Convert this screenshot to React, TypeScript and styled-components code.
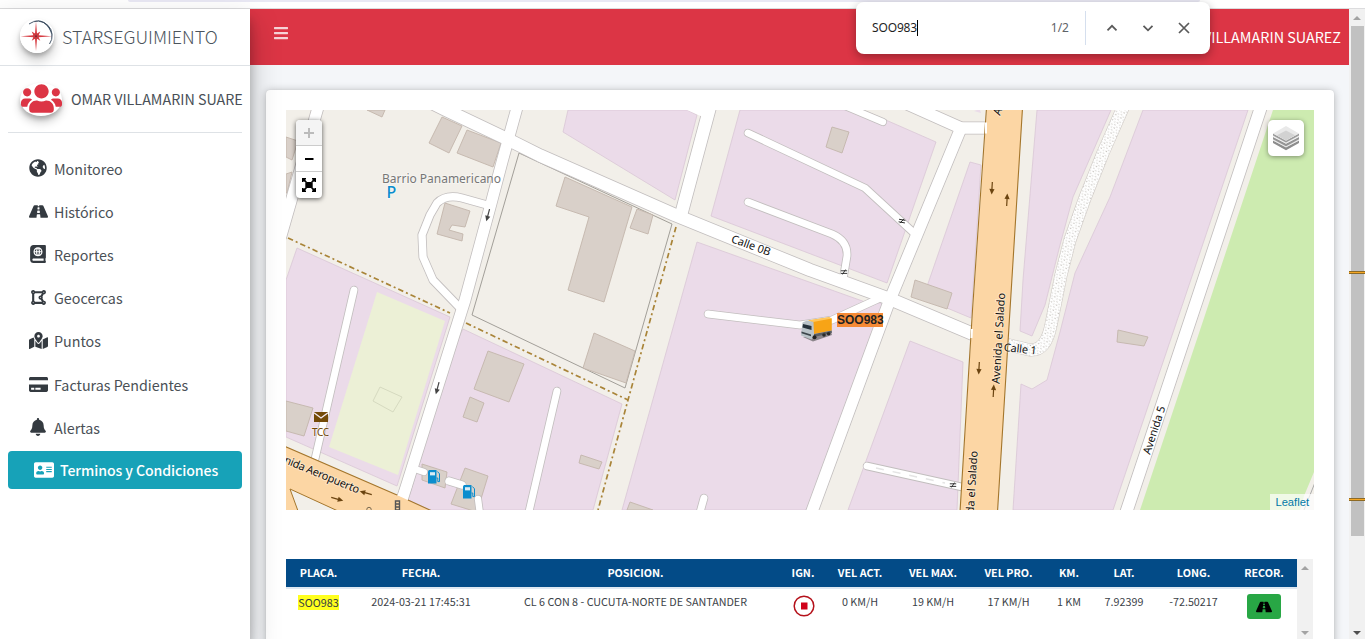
import React from "react";
import styled, { createGlobalStyle, css } from "styled-components";
import {
  FaAddressCard,
  FaAtlas,
  FaBars,
  FaBell,
  FaCreditCard,
  FaDrawPolygon,
  FaGlobeAmericas,
  FaMapMarkedAlt,
  FaRoad,
  FaUsers,
} from "react-icons/fa";

const ui = `"Noto Sans CJK SC", "Open Sans", sans-serif`;

const GlobalStyle = createGlobalStyle`
  * { box-sizing: border-box; }
  body { margin: 0; background: #fff; font-family: ${ui}; color: #343a40; overflow: hidden; }
`;

const Window = styled.div`
  position: relative;
  display: flex;
  flex-direction: column;
  width: 1365px;
  height: 639px;
  overflow: hidden;
  background: #fff;
`;
const BrowserEdge = styled.div`
  flex: none;
  height: 9px;
  padding-left: 128px;
  border-bottom: 1px solid #dcdcde;
`;
const AddressBar = styled.div`
  width: 1072px;
  height: 2px;
  background: #e9e8f4;
  border-radius: 0 0 8px 8px;
`;
const Page = styled.div`
  display: flex;
  flex: 1;
  min-height: 0;
`;

/* Sidebar */
const Sidebar = styled.aside`
  position: relative;
  z-index: 2;
  flex: none;
  width: 250px;
  background: #fff;
  box-shadow: 0 14px 28px rgba(0, 0, 0, 0.25), 0 10px 10px rgba(0, 0, 0, 0.22);
`;
const Brand = styled.div`
  display: flex;
  align-items: center;
  height: 57px;
  padding: 0 0 2px 20px;
  border-bottom: 1px solid #dee2e6;
  gap: 8px;
`;
const BrandLogo = styled.span`
  width: 34px;
  height: 34px;
  border-radius: 50%;
  box-shadow: 0 8px 12px rgba(0, 0, 0, 0.2), 0 3px 4px rgba(0, 0, 0, 0.22);
  svg { display: block; }
`;
const BrandName = styled.span`
  font-size: 17.9px;
  font-weight: 300;
  line-height: 30px;
  color: #4b545c;
  white-space: nowrap;
`;
const UserPanel = styled.div`
  display: flex;
  align-items: center;
  height: 67px;
  margin: 0 8px;
  padding-left: 12px;
  gap: 9px;
  border-bottom: 1px solid #dee2e6;
`;
const UserAvatar = styled.span`
  display: flex;
  flex: none;
  justify-content: center;
  width: 42px;
  height: 33px;
  border-radius: 50%;
  color: #dc3545;
  box-shadow: 0 6px 10px rgba(0, 0, 0, 0.2), 0 3px 4px rgba(0, 0, 0, 0.2);
`;
const UserName = styled.span`
  font-size: 14.3px;
  line-height: 24px;
  white-space: nowrap;
  color: #495057;
`;
const Menu = styled.nav`
  display: flex;
  flex-direction: column;
  padding: 14px 8px 0;
`;
const MenuItem = styled.a<{ $active?: boolean }>`
  display: flex;
  align-items: center;
  height: 43.2px;
  padding-left: 19px;
  font-size: 14.3px;
  line-height: 24px;
  color: #4a5056;
  white-space: nowrap;
  gap: 5px;
  svg { color: #343a40; }
  ${(p) =>
    p.$active &&
    css`
      height: 38px;
      margin-top: 2px;
      padding-left: 25px;
      border-radius: 4px;
      background: #17a2b8;
      color: #fff;
      font-size: 14.1px;
      font-weight: 500;
      letter-spacing: -0.08px;
      svg { color: #fff; }
    `}
`;
const MenuIcon = styled.span`
  display: flex;
  flex: none;
  justify-content: center;
  width: 22px;
  padding-bottom: 1px;
`;

/* Main column */
const Main = styled.main`
  flex: 1;
  min-width: 0;
  background: #f4f6f9;
`;
const Navbar = styled.header`
  display: flex;
  align-items: center;
  justify-content: space-between;
  height: 56px;
  padding: 0 8px 0 23px;
  background: #dc3545;
  color: #fff;
  font-size: 14.4px;
  svg { color: #f6d3d7; margin-bottom: 8px; }
`;
const NavUser = styled.span`
  line-height: 24px;
  white-space: nowrap;
`;
const Card = styled.section`
  height: 570px;
  margin: 25px 15px 0 16px;
  padding: 20px;
  border-radius: 4px;
  background: #fff;
  box-shadow: 0 0 1px rgba(0, 0, 0, 0.13), 0 1px 8px rgba(0, 0, 0, 0.28);
`;

/* Map */
const MapBox = styled.div`
  position: relative;
  height: 400px;
  overflow: hidden;
  background: #f2efe9;
  > svg { display: block; }
`;
const ZoomControl = styled.div`
  position: absolute;
  top: 10px;
  left: 10px;
  width: 26px;
  height: 78px;
  border-radius: 4px;
  background: #fff;
  box-shadow: 0 1px 5px rgba(0, 0, 0, 0.65);
`;
const ZoomButton = styled.div<{ $off?: boolean }>`
  display: flex;
  align-items: center;
  justify-content: center;
  height: 26px;
  border-radius: ${(p) => (p.$off ? "4px 4px 0 0" : "0")};
  border-bottom: 1px solid #ccc;
  background: ${(p) => (p.$off ? "#f4f4f4" : "transparent")};
  color: ${(p) => (p.$off ? "#bbb" : "#000")};
  &:last-child { border-bottom: 0; }
`;
const LayersControl = styled.div`
  position: absolute;
  top: 10px;
  right: 10px;
  display: flex;
  align-items: center;
  justify-content: center;
  width: 36px;
  height: 36px;
  border-radius: 5px;
  background: #fff;
  box-shadow: 0 1px 5px rgba(0, 0, 0, 0.4);
`;
const Attribution = styled.div`
  position: absolute;
  right: 0;
  bottom: 0;
  padding: 0 5px;
  font: 11.2px/16px "Liberation Sans", Arial, sans-serif;
  color: #0078a8;
  background: rgba(255, 255, 255, 0.7);
`;
const PlateTag = styled.div`
  position: absolute;
  left: 551px;
  top: 203px;
  width: 46px;
  height: 14px;
  background: #f58a35;
  font: bold 12px/14px "Liberation Sans", Arial, sans-serif;
  color: #222;
  text-align: center;
  white-space: nowrap;
`;

/* Table */
const TableArea = styled.div`
  display: flex;
  height: 82px;
  margin-top: 49px;
`;
const Table = styled.div`
  flex: none;
  width: 1011px;
`;
const Row = styled.div<{ $head?: boolean }>`
  display: grid;
  grid-template-columns: 65px 140px 289px 46px 68px 78px 73px 48px 62px 77px 64px;
  justify-items: center;
  height: ${(p) => (p.$head ? 30 : 52)}px;
  padding-top: ${(p) => (p.$head ? 5 : 4)}px;
  border-bottom: ${(p) => (p.$head ? "2px solid #dee8f2" : "0")};
  background: ${(p) => (p.$head ? "#034b87" : "#fff")};
  color: ${(p) => (p.$head ? "#fff" : "#3c4248")};
  font-size: 10.75px;
  font-weight: ${(p) => (p.$head ? 700 : 400)};
  line-height: ${(p) => (p.$head ? 17 : 18)}px;
  white-space: nowrap;
`;
const Found = styled.mark`
  display: block;
  height: 15px;
  margin-top: 2px;
  line-height: 15px;
  background: #ffff1e;
  color: #343a40;
`;
const IgnitionMark = styled.span`
  padding: 2px 0 0 1px;
  svg { display: block; }
`;
const RouteButton = styled.span`
  display: flex;
  align-items: center;
  justify-content: center;
  width: 34px;
  height: 25px;
  margin-top: 1px;
  border-radius: 3px;
  background: #28a745;
  color: #000;
`;
const TableScroll = styled.div`
  display: flex;
  flex-direction: column;
  align-items: center;
  justify-content: space-between;
  width: 16px;
  height: 80px;
  padding: 7px 0 4px;
  background: #f1f1f1;
`;
const Arrow = styled.span<{ $down?: boolean; $dark?: boolean }>`
  border: 4px solid transparent;
  border-top-width: ${(p) => (p.$down ? 4 : 0)}px;
  border-bottom-width: ${(p) => (p.$down ? 0 : 4)}px;
  border-${(p) => (p.$down ? "top" : "bottom")}-color: ${(p) => (p.$dark ? "#505050" : "#a3a3a3")};
`;

/* Page scrollbar */
const ScrollTrack = styled.div`
  position: relative;
  flex: none;
  display: flex;
  flex-direction: column;
  align-items: center;
  justify-content: space-between;
  width: 16px;
  padding: 7px 0 4px;
  background: #f1f1f1;
`;
const ScrollThumb = styled.div`
  width: 13px;
  height: 510px;
  margin: 6px 0 auto;
  background: #c1c1c1;
`;
const FindTick = styled.i<{ $y: number }>`
  position: absolute;
  left: 0;
  top: ${(p) => p.$y}px;
  width: 16px;
  height: 3px;
  background: #f5a623;
  border: solid #8d6a25;
  border-width: 1px 0;
`;

/* Find-in-page bar */
const FindBar = styled.div`
  position: absolute;
  z-index: 5;
  left: 856px;
  top: 2px;
  display: flex;
  align-items: center;
  width: 354px;
  height: 52px;
  padding: 0 20px 0 16px;
  border-radius: 8px;
  background: #fff;
  box-shadow: 0 3px 10px rgba(0, 0, 0, 0.32);
  font: 12px/16px "Noto Sans", "Open Sans", sans-serif;
  color: #1f1f1f;
`;
const FindQuery = styled.span`
  flex: none;
  border-right: 1px solid #000;
  letter-spacing: -0.15px;
`;
const FindCount = styled.span`
  margin-left: auto;
  padding-right: 16px;
  color: #5f6368;
`;
const FindActions = styled.div`
  display: flex;
  align-items: center;
  height: 34px;
  padding-left: 20px;
  gap: 24px;
  border-left: 1px solid #d5dfee;
`;

const Logo = () => (
  <svg width="34" height="34" viewBox="0 0 34 34">
    <circle cx="17" cy="17" r="17" fill="#fff" />
    <path d="M9 5 A14.5 14.5 0 0 1 29.5 25" fill="none" stroke="#34465a" strokeWidth=".9" />
    <path d="M13 1.6 A15.5 15.5 0 0 1 31.5 20 A17 17 0 0 0 13 1.6Z" fill="#34465a" />
    <path d="M16 2.5 L17 14.6 L20.3 12.6 L18.6 16.2 L32 17.2 L18.6 18.2 L20.3 21.8 L17 19.8 L16 32 L15 19.8 L11.7 21.8 L13.4 18.2 L0.5 17.2 L13.4 16.2 L11.7 12.6 L15 14.6Z" fill="#d63a40" />
    <circle cx="16" cy="17.2" r="2.6" fill="#c93a40" />
    <circle cx="16" cy="17.2" r="1" fill="#7d2630" />
  </svg>
);

const Chevron = ({ down }: { down?: boolean }) => (
  <svg width="12" height="12" viewBox="0 0 12 12" fill="none" stroke="#5a5a5a" strokeWidth="1.8">
    <path d={down ? "M1.5 3.8 L6 8.3 L10.5 3.8" : "M1.5 8.3 L6 3.8 L10.5 8.3"} />
  </svg>
);
const Cross = () => (
  <svg width="12" height="12" viewBox="0 0 12 12" stroke="#5a5a5a" strokeWidth="1.7">
    <path d="M1 1 L11 11 M11 1 L1 11" />
  </svg>
);

const industrial = [
  "568,110 563,132 675,200 697,115 687,110",
  "740,110 711,216 887,283 936,142 863,110",
  "970,162 981,165 971,318 923,298",
  "697,242 868,303 890,303 808,510 622,510",
  "910,341 963,362 957,510 848,510",
  "1037,110 1111,110 1073,197 1060,245 1045,305 1032,336 1020,331 1023,280",
  "1143,110 1248,110 1184,300 1113,510 1013,510 1021,384 1032,389 1047,380 1060,332 1075,273 1110,197",
  "297,248 450,317 397,486 286,437 286,280",
  "463,329 622,404 593,510 430,510 408,500 455,345",
];
const buildings = [
  "565,177 632,207 604,302 568,290 589,217 556,206",
  "637,209 653,215 648,234 630,228",
  "594,333 635,351 626,383 583,368",
  "442,117 462,126 449,153 429,143",
  "467,130 501,143 493,167 457,153",
  "367,110 385,110 382,117",
  "286,137 298,141 292,160 286,157",
  "286,174 292,172 287,193 286,193",
  "445,203 470,211 465,227 452,225 449,230 463,234 462,241 437,234",
  "832,127 849,132 842,153 826,147",
  "915,280 952,293 947,309 911,297",
  "1118,330 1148,337 1144,346 1117,342",
  "286,401 313,408 304,436 286,431",
  "488,351 524,364 509,402 474,389",
  "470,397 484,403 477,422 463,417",
  "422,464 447,472 445,488 422,480",
  "465,468 488,476 477,512 451,504",
  "581,455 602,462 599,469 579,463",
  "630,502 653,510 627,510",
];
const roads: { d: string; w: number }[] = [
  { d: "M430 102 L446 110 L505 138 L540 155.5 L675 215 L810 270 L890 299 L973 334", w: 13 },
  { d: "M518 104 L502 162 L492 200 L465 300 L402 500", w: 11.5 },
  { d: "M319 104 L281 236", w: 11.5 },
  { d: "M487 205 L462 198 Q446 194 437 203 L430 215 L422 235 L423 257 L433 280 L461 309", w: 8 },
  { d: "M711 103 L681 215", w: 13 },
  { d: "M905 103 L961 128 L988 128", w: 12 },
  { d: "M961 128 L889 302 L811 514", w: 12 },
  { d: "M748 133 L865 188 L915 234", w: 7.5 },
  { d: "M748 202 L832 234 Q848 241 847 256 L843 280", w: 7.5 },
  { d: "M845 106 L883 122", w: 7 },
  { d: "M708 314 L800 325 L832 320 L878 299", w: 7.5 },
  { d: "M354 290 L315 459", w: 7.5 },
  { d: "M557 391 L528 516", w: 7.5 },
  { d: "M704 498 L699 516", w: 7.5 },
  { d: "M867 466 L962 487", w: 7.5 },
  { d: "M412 468 L424 472", w: 7 },
  { d: "M449 481 L462 485", w: 8 },
  { d: "M478 499 L480 514", w: 7 },
  { d: "M1262 104 L1197 300 L1125 516", w: 12.5 },
];
const dottedRoad = "M1125 103 L1103 153 L1085 198 L1070 240 L1061 275 L1051 325 Q1046 351 1030 350 L1005 344";

const OneWay = ({ x, y, r, c = "#6b4410" }: { x: number; y: number; r: number; c?: string }) => (
  <g transform={`translate(${x} ${y}) rotate(${r})`}>
    <path d="M-6 0 H3" stroke={c} strokeWidth="1.2" />
    <path d="M1 -2.6 L6.5 0 L1 2.6Z" fill={c} />
  </g>
);
const Gate = ({ x, y, r }: { x: number; y: number; r: number }) => (
  <path
    transform={`translate(${x} ${y}) rotate(${r})`}
    d="M-3.2 -1.2 H3.2 M-3.2 1.4 H3.2 M-1.5 2.4 L1.5 -2.4"
    stroke="#222"
    strokeWidth=".9"
    fill="none"
  />
);
const Fuel = ({ x, y }: { x: number; y: number }) => (
  <g transform={`translate(${x} ${y})`}>
    <path d="M1 0 H8.5 V13.5 H0 V1.2Z" fill="#0b8dce" />
    <rect x="2" y="2.2" width="5" height="3.2" fill="#d8ecf6" />
    <path d="M8.5 8 H9.8 V11.6 H11.5 V3.8 L9.4 1.5" fill="none" stroke="#0b8dce" strokeWidth="1" />
  </g>
);
const Label = styled.text`
  font-family: "Noto Sans", "Open Sans", sans-serif;
  font-size: 11px;
  paint-order: stroke;
  stroke: rgba(255, 255, 255, 0.35);
  stroke-width: 2px;
  fill: #111;
`;

const StreetMap = () => (
  <svg width="1028" height="400" viewBox="286 110 1028 400">
    <defs>
      <pattern id="gravel" width="6" height="6" patternUnits="userSpaceOnUse" patternTransform="rotate(33)">
        <rect width="6" height="6" fill="#fff" />
        <circle cx="1" cy="1.2" r=".55" fill="#a9a49d" />
        <circle cx="4" cy="2.2" r=".55" fill="#b4afa8" />
        <circle cx="2.2" cy="4.4" r=".55" fill="#a9a49d" />
        <circle cx="5.2" cy="5" r=".5" fill="#b4afa8" />
      </pattern>
    </defs>
    <rect x="286" y="110" width="1028" height="400" fill="#f2efe9" />
    <path d="M1273 110 H1314 V472 L1304 496 L1300 510 H1140 L1205 315Z" fill="#cdebb0" />
    <path d="M1316 480 L1304 510" stroke="#aaa" strokeWidth="1" />
    {industrial.map((p) => (
      <polygon key={p} points={p} fill="#ebdbe9" stroke="#d9c7d6" strokeWidth=".8" />
    ))}
    <polygon points="977,110 980,110 981,113 974,111" fill="#ebdbe9" />
    <polygon points="377,292 445,321 398,475 329,447" fill="#ecf0d6" />
    <polygon points="380,387 402,397 393,412 373,401" fill="none" stroke="#d6dac0" />
    <polygon points="519,153 672,224 625,388 472,315" fill="#f2efe9" stroke="#98958f" strokeWidth=".9" />
    {buildings.map((p) => (
      <polygon key={p} points={p} fill="#d9d0c9" stroke="#c3b5ab" strokeWidth=".9" />
    ))}
    <g fill="none" stroke="#c2bebe" strokeLinecap="round" strokeLinejoin="round">
      {roads.map((r) => (
        <path key={r.d} d={r.d} strokeWidth={r.w + 1} />
      ))}
      <path d={dottedRoad} strokeWidth="13" stroke="#cfcac6" />
    </g>
    <polygon points="687,110 703,117 712,110" fill="#fff" />
    <g fill="none" stroke="#fff" strokeLinecap="round" strokeLinejoin="round">
      {roads.map((r) => (
        <path key={r.d} d={r.d} strokeWidth={r.w - 0.6} />
      ))}
      <path d={dottedRoad} stroke="url(#gravel)" strokeWidth="11.8" />
      <path d="M876 468 L945 483" stroke="#e4e4e4" strokeWidth="1.5" strokeDasharray="8 9" strokeLinecap="butt" />
    </g>
    <g fill="none" stroke="#a98438" strokeWidth="1.7" strokeDasharray="5.5 3 2 3">
      <path d="M288 238 L450 313" />
      <path d="M466 323 L628 400" />
      <path d="M676 227 L628 400 L598 510" />
    </g>

    {/* Avenida el Salado */}
    <polygon points="987,110 1022.5,110 1010,310 997.5,512 960,512 973,310" fill="#fcd6a4" />
    <path d="M986.5 108 L972.5 310 L960 512 M1022.5 108 L1010 310 L997.5 512" fill="none" stroke="#a4762c" strokeWidth="1.1" />
    <path d="M986 122.5 V133.5" stroke="#fff" strokeWidth="2" />
    <path d="M972 329 L971.5 338" stroke="#fff" strokeWidth="2" />

    {/* Avenida Aeropuerto */}
    <path d="M284 446 L397 495 L431 511 H284Z" fill="#fcd6a4" />
    <path d="M284 446 L397 495 M408 500 L432 511" fill="none" stroke="#a4762c" strokeWidth="1.1" />
    <path d="M290 489 L338 511 H298Z" fill="#f2efe9" stroke="#a4762c" strokeWidth="1" />
    <path d="M407 485 L402.5 497" stroke="#fff" strokeWidth="10" />

    <OneWay x={488} y={215} r={105} c="#444" />
    <OneWay x={437.5} y={388} r={105} c="#444" />
    <OneWay x={992} y={188} r={93} />
    <OneWay x={1007} y={200} r={-87} />
    <OneWay x={979} y={368} r={93} />
    <OneWay x={993.5} y={391} r={-87} />
    <OneWay x={366} y={493} r={196} />
    <OneWay x={337} y={499} r={16} />
    <Gate x={902} y={221} r={10} />
    <Gate x={844} y={272} r={0} />
    <Gate x={953} y={485} r={0} />
    <Fuel x={428} y={470} />
    <Fuel x={463} y={485} />
    <path d="M395.5 501 h4 v9 h-4z M395.5 504 h4 M395.5 507 h4" fill="none" stroke="#555" strokeWidth="1.4" />
    <circle cx="369" cy="509.5" r="2.2" fill="none" stroke="#7a6a50" />
    <rect x="314" y="412" width="14" height="10" fill="#734a08" />
    <path d="M314 412.8 L321 418 L328 412.8" fill="none" stroke="#f4e9f2" strokeWidth="1.4" />

    <Label x="382" y="183" style={{ fontSize: 12, fill: "#777" }} textLength="119">Barrio Panamericano</Label>
    <Label x="386.5" y="197.5" style={{ fontSize: 16, fontWeight: 500, fill: "#0b8dce" }}>P</Label>
    <Label x="312" y="435.5" style={{ fontSize: 10, fill: "#734a08" }} textLength="17">TCC</Label>
    <Label transform="translate(730.5 242) rotate(20)" textLength="41">Calle 0B</Label>
    <Label transform="translate(1003.5 351) rotate(6)" textLength="33">Calle 1</Label>
    <Label transform="translate(999.5 384) rotate(-86.5)" textLength="91">Avenida el Salado</Label>
    <Label transform="translate(972 542) rotate(-86.5)" textLength="91">Avenida el Salado</Label>
    <Label transform="translate(1000 116) rotate(-70)">A</Label>
    <Label transform="translate(1150 455) rotate(-72)" textLength="50">Avenida 5</Label>
    <Label transform="translate(267 456) rotate(22.5)" textLength="98">Avenida Aeropuerto</Label>

    {/* Tracked truck */}
    <g>
      <path d="M803 337 L813 341.5 L832 335 L831 332 L812 336Z" fill="#4d4d4d" opacity=".6" />
      <path d="M808 320.5 L829 317.3 L831.8 318.5 L831.8 330.5 L814 334 L812 322Z" fill="#f7a416" />
      <path d="M808 320.5 L829 317.3 L831.8 318.5 L813 322Z" fill="#ffc65c" />
      <path d="M802.5 322.5 L807 320.5 L813.5 322 L814 336.5 L811.5 339.5 L801 335.5Z" fill="#b9c3c8" />
      <path d="M803 324 L811.5 326 V330 L802.5 327.6Z" fill="#26323b" />
      <path d="M801.5 331.5 L811 334.5 V336.3 L801.5 333.2Z" fill="#3b444a" />
      <path d="M814 334 L831.8 330.5 V333 L814 337Z" fill="#5a5f63" />
      <circle cx="814.5" cy="337.3" r="2" fill="#222" />
      <circle cx="824" cy="335" r="1.8" fill="#2b2b2b" />
      <circle cx="828.6" cy="333.8" r="1.8" fill="#2b2b2b" />
    </g>
  </svg>
);

const MapPanel = () => (
  <MapBox>
    <StreetMap />
    <PlateTag>SOO983</PlateTag>
    <ZoomControl>
      <ZoomButton $off>
        <svg width="12" height="12" stroke="currentColor" strokeWidth="2"><path d="M6 1 V11 M1 6 H11" /></svg>
      </ZoomButton>
      <ZoomButton>
        <svg width="10" height="4" stroke="currentColor" strokeWidth="2"><path d="M1 2 H9.5" /></svg>
      </ZoomButton>
      <ZoomButton>
        <svg width="14" height="14" viewBox="0 0 14 14">
          <rect x="3.3" y="4" width="7.4" height="6" rx="1.5" />
          <path d="M0 0 H4 V1.6 H3 L5 4 L4 5 L1.6 3 V4 H0Z M14 0 V4 H12.4 V3 L10 5 L9 4 L11 1.6 H10 V0Z M0 14 V10 H1.6 V11 L4 9 L5 10 L3 12.4 H4 V14Z M14 14 H10 V12.4 H11 L9 10 L10 9 L12.4 11 V10 H14Z" />
        </svg>
      </ZoomButton>
    </ZoomControl>
    <LayersControl>
      <svg width="26" height="26" viewBox="0 0 26 26">
        <path d="M0 15.5 L13 22 L26 15.5 V18 L13 25.3 L0 18Z" fill="#8d8d8d" />
        <path d="M0 13.6 L13 20.6 L26 13.6 V15.4 L13 22.6 L0 15.4Z" fill="#e8e8e8" />
        <path d="M0 12 L13 18.5 L26 12 V14.2 L13 21.2 L0 14.2Z" fill="#959595" />
        <path d="M0 10 L13 17 L26 10 V11.8 L13 18.8 L0 11.8Z" fill="#ececec" />
        <path d="M0 8.4 L13 15.2 L26 8.4 V10.4 L13 17.4 L0 10.4Z" fill="#9c9c9c" />
        <path d="M13 1 L26 8.4 L13 15.8 L0 8.4Z" fill="#e9e9e9" />
        <path d="M13 5.5 L22 10.2 L13 15.4 L4 10.2Z" fill="#d2d2d2" />
      </svg>
    </LayersControl>
    <Attribution>Leaflet</Attribution>
  </MapBox>
);

const menu = [
  { icon: <FaGlobeAmericas size={18} />, text: "Monitoreo" },
  { icon: <FaRoad size={19} />, text: "Histórico" },
  { icon: <FaAtlas size={18} />, text: "Reportes" },
  { icon: <FaDrawPolygon size={17} />, text: "Geocercas" },
  { icon: <FaMapMarkedAlt size={19} />, text: "Puntos" },
  { icon: <FaCreditCard size={19} />, text: "Facturas Pendientes" },
  { icon: <FaBell size={18} />, text: "Alertas" },
];
const heads = ["PLACA.", "FECHA.", "POSICION.", "IGN.", "VEL ACT.", "VEL MAX.", "VEL PRO.", "KM.", "LAT.", "LONG.", "RECOR."];

export default function App() {
  return (
    <Window>
      <GlobalStyle />
      <BrowserEdge>
        <AddressBar />
      </BrowserEdge>
      <Page>
        <Sidebar>
          <Brand>
            <BrandLogo><Logo /></BrandLogo>
            <BrandName>STARSEGUIMIENTO</BrandName>
          </Brand>
          <UserPanel>
            <UserAvatar><FaUsers size={41} style={{ marginTop: -5 }} /></UserAvatar>
            <UserName>OMAR VILLAMARIN SUARE</UserName>
          </UserPanel>
          <Menu>
            {menu.map((m) => (
              <MenuItem key={m.text}>
                <MenuIcon>{m.icon}</MenuIcon>
                {m.text}
              </MenuItem>
            ))}
            <MenuItem $active>
              <MenuIcon><FaAddressCard size={20} /></MenuIcon>
              Terminos y Condiciones
            </MenuItem>
          </Menu>
        </Sidebar>
        <Main>
          <Navbar>
            <FaBars size={16} />
            <NavUser>OMAR VILLAMARIN SUAREZ</NavUser>
          </Navbar>
          <Card>
            <MapPanel />
            <TableArea>
              <Table>
                <Row $head>
                  {heads.map((h) => (
                    <span key={h}>{h}</span>
                  ))}
                </Row>
                <Row>
                  <Found>SOO983</Found>
                  <span>2024-03-21 17:45:31</span>
                  <span>CL 6 CON 8 - CUCUTA-NORTE DE SANTANDER</span>
                  <IgnitionMark>
                    <svg width="22" height="22" viewBox="0 0 22 22">
                      <circle cx="11" cy="11" r="9.8" fill="#fff" stroke="#b5121b" strokeWidth="1.5" />
                      <rect x="8" y="7.5" width="6.5" height="7" fill="#d0021b" />
                    </svg>
                  </IgnitionMark>
                  <span>0 KM/H</span>
                  <span>19 KM/H</span>
                  <span>17 KM/H</span>
                  <span>1 KM</span>
                  <span>7.92399</span>
                  <span>-72.50217</span>
                  <RouteButton><FaRoad size={16} /></RouteButton>
                </Row>
              </Table>
              <TableScroll>
                <Arrow />
                <Arrow $down />
              </TableScroll>
            </TableArea>
          </Card>
        </Main>
        <ScrollTrack>
          <Arrow />
          <ScrollThumb />
          <Arrow $down $dark />
          <FindTick $y={262} />
          <FindTick $y={489} />
        </ScrollTrack>
      </Page>
      <FindBar>
        <FindQuery>SOO983</FindQuery>
        <FindCount>1/2</FindCount>
        <FindActions>
          <Chevron />
          <Chevron down />
          <Cross />
        </FindActions>
      </FindBar>
    </Window>
  );
}
